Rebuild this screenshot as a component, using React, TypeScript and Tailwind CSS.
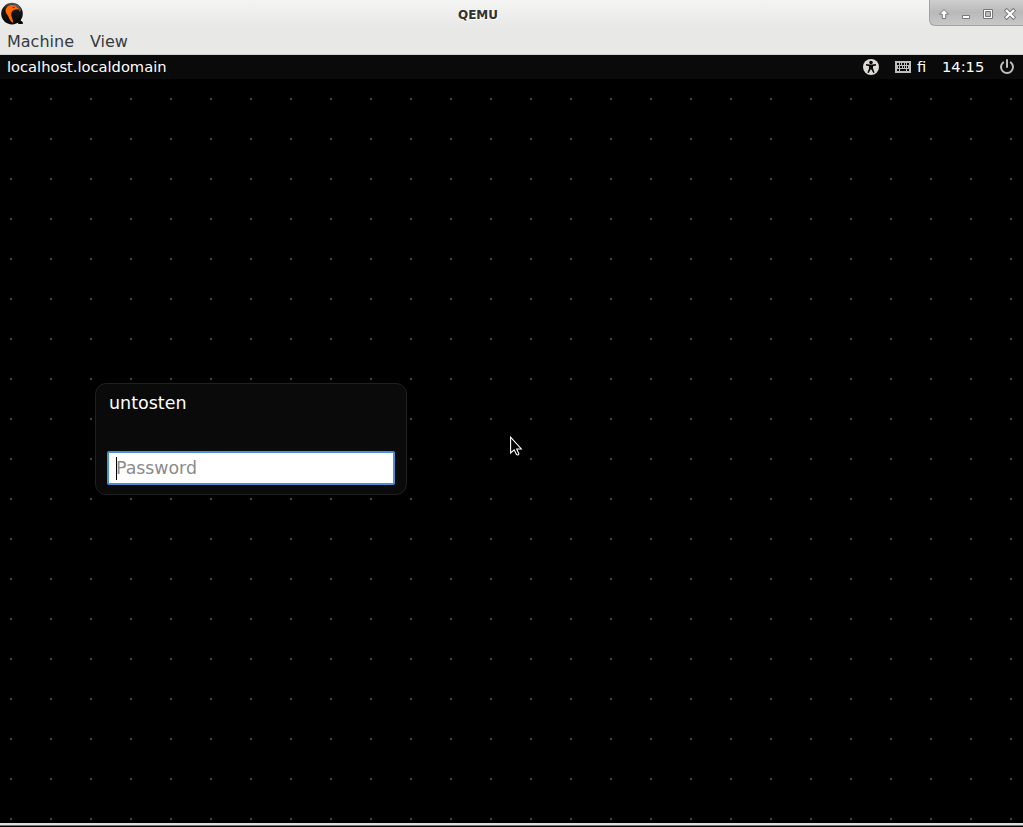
import React, { useState } from "react";

const menuItems: string[] = ["Machine", "View"];

const QemuLogo: React.FC = () => (
  <svg width="24" height="26" viewBox="0 0 24 26">
    <defs>
      <linearGradient id="shell" x1="0" y1="0" x2="0" y2="1">
        <stop offset="0" stopColor="#555" />
        <stop offset="0.3" stopColor="#171717" />
        <stop offset="1" stopColor="#080808" />
      </linearGradient>
    </defs>
    <circle cx="12" cy="13.6" r="10.8" fill="url(#shell)" />
    <path d="M16 20L20.5 18L20.6 20.5L22.8 22V24H18.5Z" fill="#080808" />
    <path d="M13 4Q18.5 4.4 21.3 9.5Q21.5 12 19 11.5Q18.5 7 13 4Z" fill="#999" opacity="0.45" />
    <path
      d="M5.6 10.5C5.8 7.4 8.4 5 12 5C14.2 5 15.8 5.8 16.6 7L19.2 9.2L15.6 9.5C13.2 9.8 11.2 11.5 11.2 14C11.2 17 13 19 13.2 23C9.3 20.5 9.4 17.8 7.6 15.2C6.3 13.4 5.5 12 5.6 10.5Z"
      fill="#ff6900"
    />
    <path d="M12.4 6.7L15 7.2L14.2 8.1L12.9 7.8Z" fill="#3c1c08" />
  </svg>
);

const WindowControls: React.FC = () => (
  <div className="flex h-[26px] w-[94px] items-center rounded-bl-[6px] border-b border-l border-[#a2a2a2] bg-linear-to-b from-[#cfcfcf] via-[#b9b9b9] to-[#c8c8c8]">
    <svg width="93" height="26" viewBox="0 0 93 26" strokeLinejoin="round">
      <path d="M14 9.5L18.5 14.2H15.7V18.5H12.3V14.2H9.5Z" fill="#fff" stroke="#777" strokeWidth="1" />
      <rect x="32.5" y="15.5" width="7" height="3" fill="#fff" stroke="#777" />
      <path d="M53.5 9.5H62.5V18.5H53.5Z M55.5 11.5V16.5H60.5V11.5Z" fill="#fff" fillRule="evenodd" stroke="#777" />
      <path d="M76.7 10.7L83.3 17.3M83.3 10.7L76.7 17.3" stroke="#777" strokeWidth="4" strokeLinecap="square" />
      <path d="M76.7 10.7L83.3 17.3M83.3 10.7L76.7 17.3" stroke="#fff" strokeWidth="2.2" strokeLinecap="square" />
    </svg>
  </div>
);

const AccessibilityIcon: React.FC = () => (
  <svg width="16" height="16" viewBox="0 0 16 16">
    <circle cx="8" cy="8" r="8" fill="#dedad5" />
    <circle cx="8" cy="3.5" r="1.8" fill="#0a0a0a" />
    <path d="M3 5L6.5 5.6H9.5L13 5V6.4L10 7.2V9.5L11.6 13.5L10.3 14L8.4 10.5H7.6L5.7 14L4.4 13.5L6 9.5V7.2L3 6.4Z" fill="#0a0a0a" />
  </svg>
);

const KeyboardIcon: React.FC = () => (
  <svg width="16" height="12" viewBox="0 0 16 12" shapeRendering="crispEdges">
    <rect width="16" height="12" fill="#bebebe" />
    <path
      d="M2 2h2v2H2zM5 2h1v2H5zM7 2h2v2H7zM10 2h1v2h-1zM12 2h2v2h-2zM3 5h1v2H3zM5 5h2v2H5zM8 5h1v2H8zM10 5h1v2h-1zM12 5h1v2h-1zM2 8h2v2H2zM5 8h6v2H5zM12 8h2v2h-2z"
      fill="#0a0a0a"
    />
  </svg>
);

const PowerIcon: React.FC = () => (
  <svg width="16" height="16" viewBox="0 0 16 16" fill="none" stroke="#bebebe" strokeWidth="2">
    <path d="M4.2 3.4A6 6 0 1 0 11.8 3.4" strokeLinecap="round" />
    <path d="M8 1V8" strokeLinecap="round" />
  </svg>
);

const Pointer: React.FC = () => (
  <svg className="absolute left-[510px] top-[357px]" width="14" height="22" viewBox="0 0 14 22">
    <path d="M0.6 1.2V17L4.2 13.8L6.5 18.6Q8.3 19.6 8.9 17.8L6.7 13H11.3Z" fill="#000" stroke="#fff" strokeWidth="1.1" />
  </svg>
);

const App: React.FC = () => {
  const [password, setPassword] = useState("");

  return (
    <div className="flex h-[827px] w-[1023px] flex-col overflow-hidden bg-black font-['DejaVu_Sans',sans-serif]">
      <header className="flex h-[55px] flex-col border-b border-[#d0d0ce] bg-[#e8e8e7]">
        <div className="grid h-[28px] grid-cols-[94px_1fr_94px] items-start bg-linear-to-b from-[#f4f4f3] to-[#e8e8e7]">
          <QemuLogo />
          <div className="pr-[67px] pt-[7px] text-center text-[12px] leading-[17px] font-bold text-[#2e3436] [text-shadow:1px_1px_0_#fff]">
            QEMU
          </div>
          <WindowControls />
        </div>
        <nav className="flex h-[26px] items-center gap-[16px] pl-[7px] text-[16px] leading-[26px] text-[#363b3d]">
          {menuItems.map((item) => (
            <button key={item} type="button" className="pt-[2px]">{item}</button>
          ))}
        </nav>
      </header>

      <div className="flex h-[24px] items-center justify-between bg-[#0a0a0a] pl-[7px] pr-[8px] text-[14.667px] leading-[24px] text-white">
        <span>localhost.localdomain</span>
        <div className="flex items-center">
          <AccessibilityIcon />
          <div className="ml-[16px] flex w-[47px] items-center gap-[6px]">
            <KeyboardIcon />
            <span>fi</span>
          </div>
          <span className="w-[57px]">14:15</span>
          <PowerIcon />
        </div>
      </div>

      <main className="relative h-[744px] bg-[conic-gradient(from_270deg_at_2px_2px,#444_90deg,#000_0)] bg-[length:40px_40px] bg-[position:10px_19px] pl-[95px] pt-[304px]">
        <form
          className="flex h-[112px] w-[312px] flex-col justify-between rounded-[11px] border border-[#202020] bg-[#0a0a0a] px-[11px] pb-[9px] pt-[8px]"
          onSubmit={(e) => e.preventDefault()}
        >
          <div className="pl-[2px] text-[17.5px] leading-[22px] text-white">untosten</div>
          <label className="flex h-[34px] items-center rounded-[2px] border-2 border-[#4a90d9] bg-white pl-[7px]">
            <span className="h-[23px] w-px bg-black" />
            <input
              className="-ml-[1px] w-[260px] text-[17.333px] leading-[24px] text-black outline-none placeholder:text-[#8b8b8b]"
              type="password"
              placeholder="Password"
              value={password}
              onChange={(e) => setPassword(e.target.value)}
            />
          </label>
        </form>
        <Pointer />
      </main>

      <footer className="h-[3px] border-b border-[#777] bg-[#dededc]" />
    </div>
  );
};

export default App;
